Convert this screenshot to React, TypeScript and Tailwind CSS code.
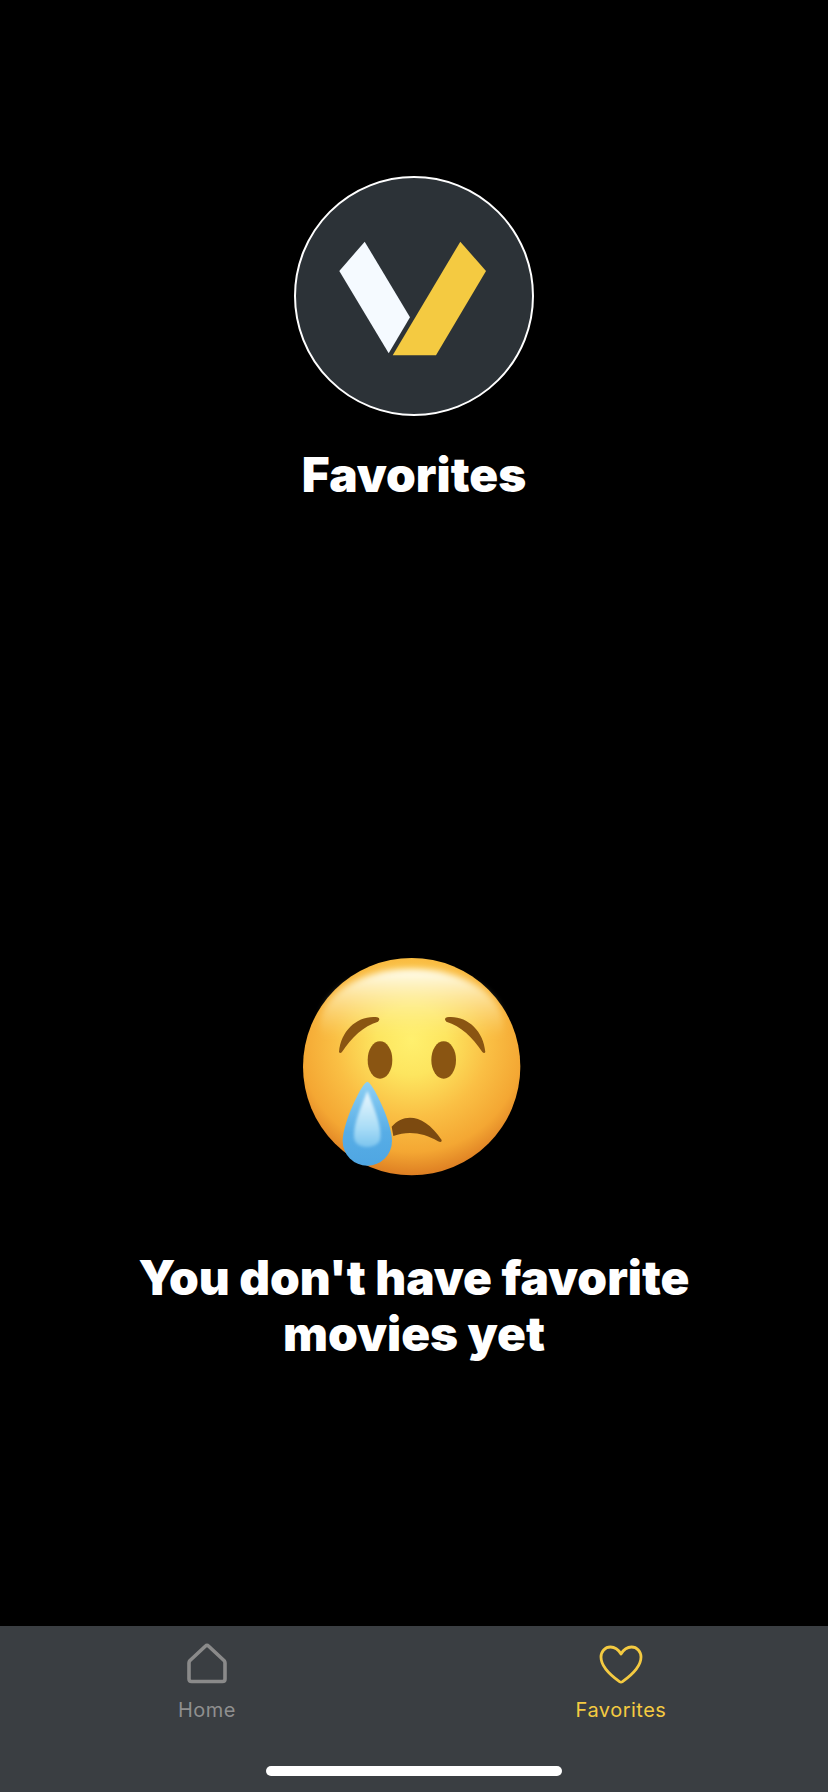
function Logo() {
  return (
    <svg width="240" height="240" viewBox="0 0 240 240">
      <polygon points="70.7,65.7 116,141.3 94.7,177.3 45.3,95" fill="#f5faff" />
      <polygon points="166.3,65.7 192,95 142,179.3 98.7,179.3" fill="#f4ca41" />
    </svg>
  );
}

function CryingFace() {
  return (
    <svg width="270" height="250" viewBox="0 0 810 750">
      <defs>
        <radialGradient id="face" gradientUnits="userSpaceOnUse" cx="395" cy="300" r="420">
          <stop offset="0" stopColor="#fff06e" />
          <stop offset="0.25" stopColor="#fde55f" />
          <stop offset="0.55" stopColor="#fabf44" />
          <stop offset="0.8" stopColor="#f4a733" />
          <stop offset="1" stopColor="#d9761f" />
        </radialGradient>
        <linearGradient id="shine" gradientUnits="userSpaceOnUse" x1="395" y1="90" x2="395" y2="290">
          <stop offset="0" stopColor="#fffdf0" stopOpacity="1" />
          <stop offset="1" stopColor="#fff3a0" stopOpacity="0" />
        </linearGradient>
        <linearGradient id="tear" gradientUnits="userSpaceOnUse" x1="262" y1="425" x2="262" y2="678">
          <stop offset="0" stopColor="#8fd0f4" />
          <stop offset="0.6" stopColor="#57ade6" />
          <stop offset="1" stopColor="#4fa6e2" />
        </linearGradient>
        <linearGradient id="tearLight" gradientUnits="userSpaceOnUse" x1="262" y1="450" x2="262" y2="640">
          <stop offset="0" stopColor="#eef9fe" />
          <stop offset="0.6" stopColor="#a8dcf6" />
          <stop offset="1" stopColor="#6cbcec" />
        </linearGradient>
        <filter id="soft" x="-20%" y="-20%" width="140%" height="140%">
          <feGaussianBlur stdDeviation="9" />
        </filter>
        <filter id="softer" x="-20%" y="-20%" width="140%" height="140%">
          <feGaussianBlur stdDeviation="4" />
        </filter>
      </defs>
      <circle cx="395" cy="380" r="326" fill="url(#face)" />
      <ellipse cx="395" cy="255" rx="275" ry="168" fill="url(#shine)" filter="url(#soft)" />
      <path d="M177 336 C183 270 235 225 292 232 Q303 236 294 245 C250 258 215 292 186 336 Q180 342 177 336Z" fill="#8a5512" />
      <path d="M616 336 C610 270 558 225 501 232 Q490 236 499 245 C543 258 578 292 607 336 Q613 342 616 336Z" fill="#8a5512" />
      <ellipse cx="300" cy="360" rx="37" ry="56" fill="#8a5512" />
      <ellipse cx="491" cy="360" rx="37" ry="56" fill="#8a5512" />
      <path d="M335 560 C375 515 435 525 485 600 Q486 610 474 604 C430 578 385 572 340 588Z" fill="#7c4a10" />
      <path d="M262 425 C276 425 336 545 336 603 A74 74 0 0 1 188 603 C188 545 248 425 262 425Z" fill="url(#tear)" />
      <path d="M262 452 C272 480 310 560 300 600 C290 628 232 628 224 600 C214 560 252 480 262 452Z" fill="url(#tearLight)" filter="url(#softer)" />
    </svg>
  );
}

function HomeIcon() {
  return (
    <svg width="42" height="42" viewBox="0 0 42 42" fill="none" stroke="#8a8a8a" strokeWidth="3.6" strokeLinejoin="round">
      <path d="M19.3 4.2 Q21 2.6 22.7 4.2 L38 18.5 Q39 19.6 39 21 V37 Q39 39.5 36.5 39.5 H5.5 Q3 39.5 3 37 V21 Q3 19.6 4 18.5Z" />
    </svg>
  );
}

function HeartIcon() {
  return (
    <svg width="44" height="44" viewBox="0 -3 44 44" fill="none" stroke="#f4ca41" strokeWidth="2.8" strokeLinejoin="round">
      <path d="M22 9 C19 4 15 2 11.5 2 C6 2 2 6.5 2 12 C2 22.5 14 32 20.5 36.6 Q22 37.6 23.5 36.6 C30 32 42 22.5 42 12 C42 6.5 38 2 32.5 2 C29 2 25 4 22 9Z" />
    </svg>
  );
}

export default function App() {
  return (
    <div className="flex flex-col h-[1792px] bg-black text-white font-['Inter',sans-serif]">

      {/* Content */}
      <div className="flex-1 flex flex-col items-center pt-[176px]">
        <div className="w-[240px] h-[240px] rounded-full border-2 border-white bg-[#2c3237] flex items-center justify-center">
          <div className="shrink-0">
            <Logo />
          </div>
        </div>
        <h1 className="mt-[31px] text-[47.7px] leading-[56px] font-black">Favorites</h1>

        <div className="mt-[437px] ml-[2px]">
          <CryingFace />
        </div>
        <p className="mt-[60px] text-[47.7px] leading-[56px] font-black text-center">
          You don't have favorite
          <br />
          movies yet
        </p>
      </div>

      {/* Tab bar */}
      <div className="relative h-[166px] bg-[#3a3e42]">
        <div className="flex pt-[16px]">
          <div className="w-1/2 flex flex-col items-center text-[#8f8f8f]">
            <div className="h-[44px]">
              <HomeIcon />
            </div>
            <span className="mt-[12px] text-[20px] leading-[24px] tracking-[0.5px]">Home</span>
          </div>
          <div className="w-1/2 flex flex-col items-center text-[#f4ca41]">
            <HeartIcon />
            <span className="mt-[12px] text-[20px] leading-[24px] tracking-[0.5px]">Favorites</span>
          </div>
        </div>
        <div className="absolute bottom-[16px] left-[266px] w-[296px] h-[10px] rounded-full bg-white" />
      </div>

    </div>
  );
}
